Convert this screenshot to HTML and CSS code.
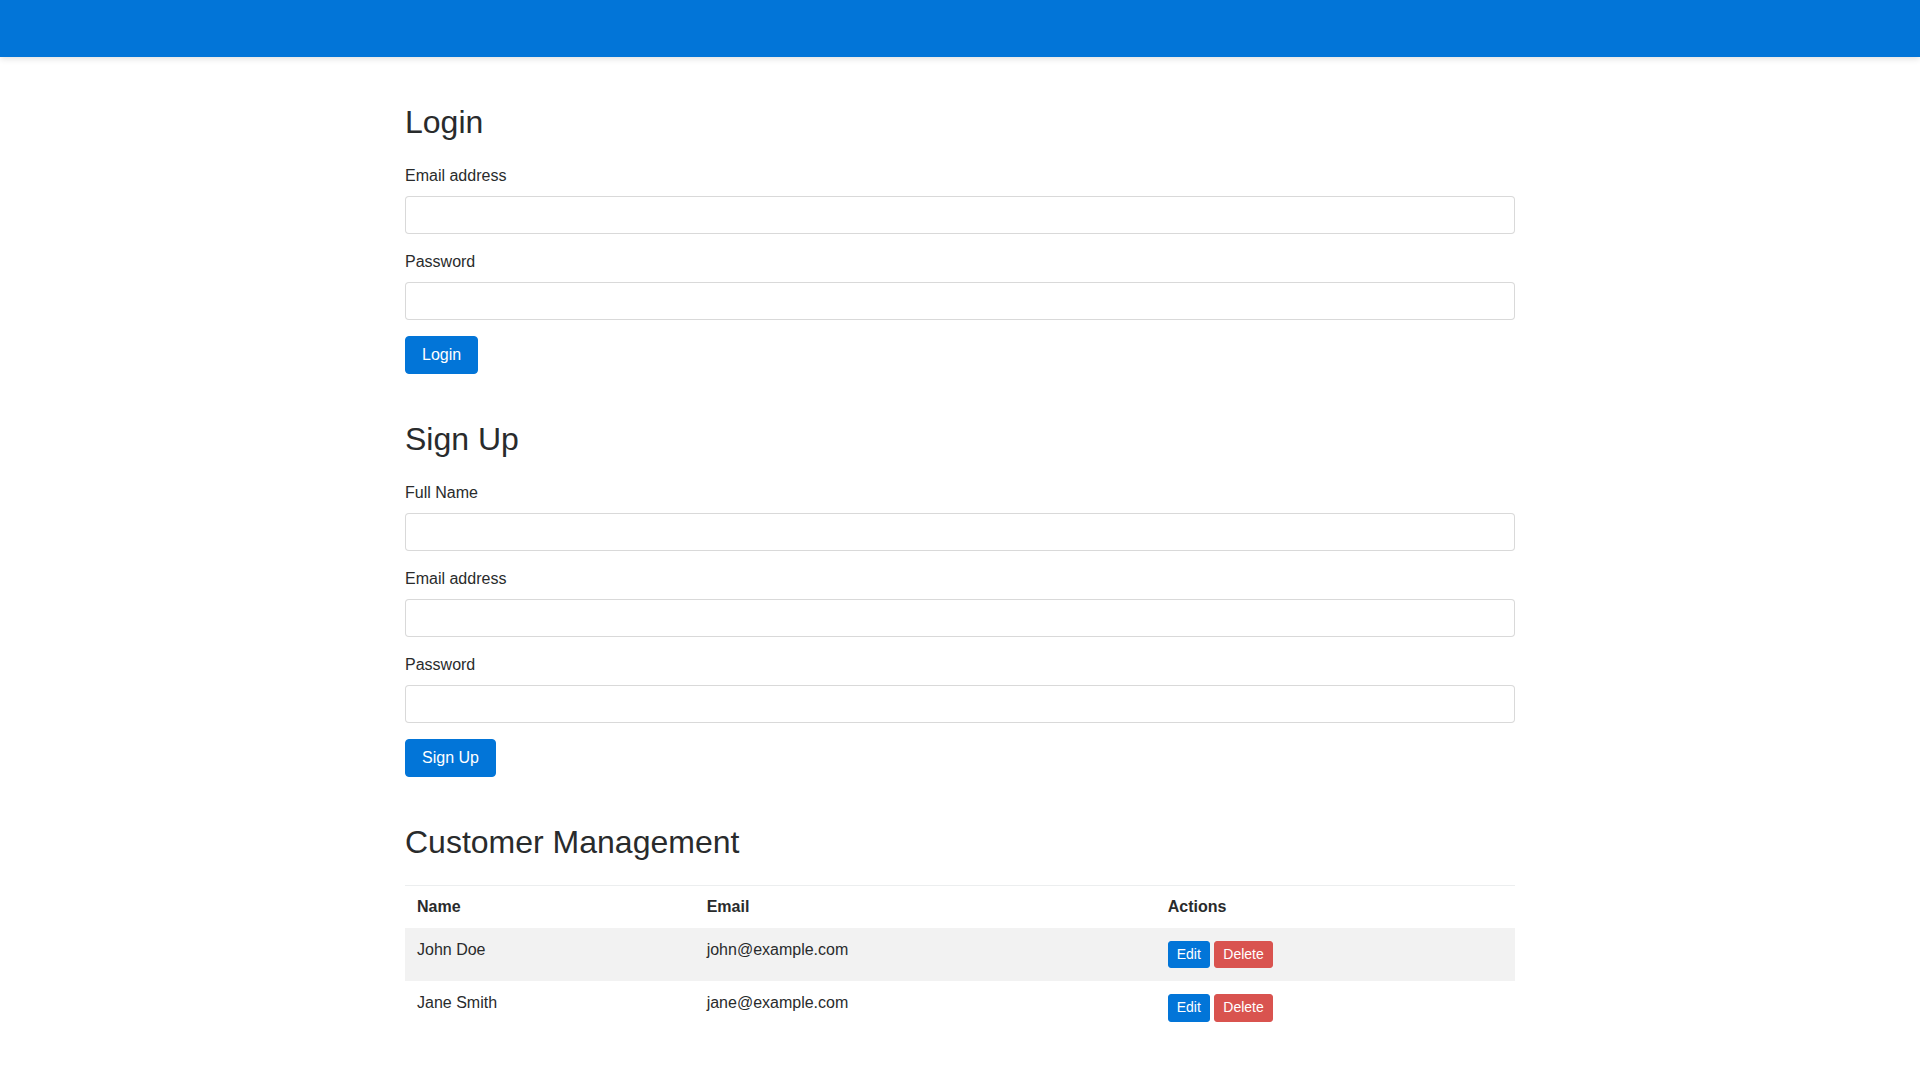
FILE: index.html
```html
<!DOCTYPE html>
<html lang="en">
<head>
<meta charset="utf-8">
<title>Customer Portal</title>
<link rel="stylesheet" href="styles.css">
</head>
<body>
<header class="topbar"></header>
<main class="container">
  <section class="section">
    <h2 class="section-title">Login</h2>
    <form class="form">
      <div class="form-group">
        <label class="form-label" for="login-email">Email address</label>
        <input class="form-control" id="login-email" type="email">
      </div>
      <div class="form-group">
        <label class="form-label" for="login-password">Password</label>
        <input class="form-control" id="login-password" type="password">
      </div>
      <button class="btn btn-primary" type="button">Login</button>
    </form>
  </section>

  <section class="section">
    <h2 class="section-title">Sign Up</h2>
    <form class="form">
      <div class="form-group">
        <label class="form-label" for="su-name">Full Name</label>
        <input class="form-control" id="su-name" type="text">
      </div>
      <div class="form-group">
        <label class="form-label" for="su-email">Email address</label>
        <input class="form-control" id="su-email" type="email">
      </div>
      <div class="form-group">
        <label class="form-label" for="su-password">Password</label>
        <input class="form-control" id="su-password" type="password">
      </div>
      <button class="btn btn-primary" type="button">Sign Up</button>
    </form>
  </section>

  <section class="section">
    <h2 class="section-title">Customer Management</h2>
    <table class="table">
      <thead>
        <tr><th>Name</th><th>Email</th><th>Actions</th></tr>
      </thead>
      <tbody>
        <tr class="row-striped">
          <td>John Doe</td>
          <td>john@example.com</td>
          <td><button class="btn btn-sm btn-primary" type="button">Edit</button> <button class="btn btn-sm btn-danger" type="button">Delete</button></td>
        </tr>
        <tr>
          <td>Jane Smith</td>
          <td>jane@example.com</td>
          <td><button class="btn btn-sm btn-primary" type="button">Edit</button> <button class="btn btn-sm btn-danger" type="button">Delete</button></td>
        </tr>
      </tbody>
    </table>
  </section>
</main>
</body>
</html>
```
FILE: styles.css
```css
* { box-sizing: border-box; }

html, body {
  margin: 0;
  padding: 0;
  background: #fff;
}

body {
  font-family: "Liberation Sans", Arial, sans-serif;
  font-size: 16px;
  line-height: 1.5;
  color: #292b2c;
}

.topbar {
  height: 57px;
  background: #0275d8;
  box-shadow: 0 2px 6px rgba(0, 0, 0, 0.12);
}

.container {
  max-width: 1140px;
  margin: 0 auto;
  padding: 48px 15px 40px;
}

.section {
  margin-bottom: 48px;
}

.section-title {
  margin: 0 0 24px;
  font-size: 32px;
  font-weight: 500;
  line-height: 1.1;
  color: #292b2c;
}

.form-group {
  margin-bottom: 16px;
}

.form-label {
  display: block;
  margin-bottom: 8px;
  line-height: 24px;
}

.form-control {
  display: block;
  width: 100%;
  height: 38px;
  padding: 8px 12px;
  font-family: inherit;
  font-size: 16px;
  line-height: 1.25;
  color: #464a4c;
  background: #fff;
  border: 1px solid rgba(0, 0, 0, 0.15);
  border-radius: 4px;
}

.btn {
  display: inline-block;
  padding: 8px 16px;
  font-family: inherit;
  font-size: 16px;
  line-height: 1.25;
  color: #fff;
  border: 1px solid transparent;
  border-radius: 4px;
  cursor: pointer;
  vertical-align: middle;
}

.btn-primary {
  background: #0275d8;
  border-color: #0275d8;
}

.btn-danger {
  background: #d9534f;
  border-color: #d9534f;
}

.btn-sm {
  padding: 4px 8px;
  font-size: 14px;
  line-height: 1.25;
  border-radius: 3px;
  vertical-align: baseline;
}

.table {
  width: 100%;
  border-collapse: separate;
  border-spacing: 0;
  line-height: normal;
}

.table th,
.table td {
  padding: 12px;
  text-align: left;
  vertical-align: top;
}

.table thead th {
  font-weight: bold;
  border-top: 1px solid #eceeef;
}

.table tbody td {
  border-top: 1px solid transparent;
  border-bottom: 1px solid transparent;
}

.row-striped {
  background: #f2f2f2;
}
```
